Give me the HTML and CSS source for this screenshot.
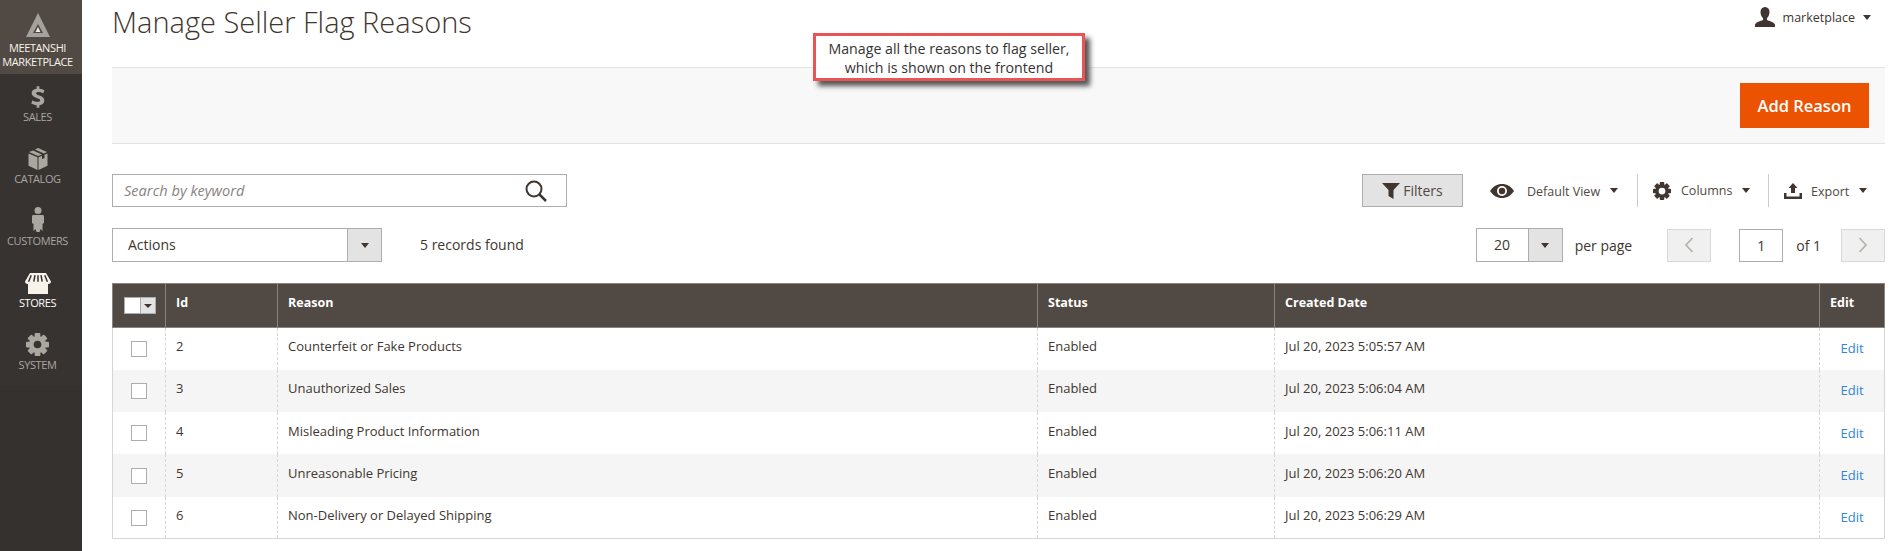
FILE: index.html
```html
<!doctype html>
<html>
  <head>
    <meta charset="utf8">
    <title>Manage Seller Flag Reasons</title>
    <link rel="stylesheet" href="styles.css">
  </head>
  <body>
    <nav class="sidebar">
      <div class="logo">
        <svg class="logo-mark" width="24" height="25" viewBox="0 0 24 25"><path d="M12 0L24 24H0z" fill="#a5a19c"/><path d="M12 11l5 9H7z" fill="#514943"/><path d="M12 14l2.400 5H9.600z" fill="#f0eeea"/></svg>
        <div class="logo-text">MEETANSHI<br>MARKETPLACE</div>
      </div>
      <div class="nav-list">
        <a class="nav-item">
          <svg width="18" height="22" viewBox="0 0 20 24"><path d="M8.500 0h3v2.800c2.400.2 4.300.9 5.600 1.700l-1.300 3.500c-1.600-.9-3.400-1.500-5.200-1.500-1.700 0-2.600.6-2.600 1.500 0 1 1 1.500 3.500 2.300 3.600 1.100 5.500 2.700 5.500 5.500 0 2.700-1.900 4.800-5.500 5.300V24h-3v-2.900c-2.500-.2-4.700-1-6-1.900l1.300-3.600c1.600 1 3.700 1.800 5.700 1.800 1.800 0 2.900-.7 2.900-1.800 0-1-.9-1.600-3.200-2.300C5.100 12 2.900 10.500 2.900 7.600c0-2.500 1.800-4.400 5.600-4.800z" fill="#aaa6a0"/></svg>
          <span>SALES</span>
        </a>
        <a class="nav-item">
          <svg width="20" height="22" viewBox="0 0 20 22"><path d="M10 0l9 4-3 1.500-9-4zM5 2.400l9 4L10 8 1 4z" fill="#aaa6a0"/><path d="M.500 5.500l9 3.700V22l-9-4.200zM19.500 5.500v12.300l-9 4.200V9.200l3.500-1.400V11l2.500-1V6.800z" fill="#aaa6a0"/></svg>
          <span>CATALOG</span>
        </a>
        <a class="nav-item">
          <svg width="14" height="25" viewBox="0 0 14 25"><circle cx="7" cy="3.500" r="3.500" fill="#aaa6a0"/><path d="M2.500 8h9c1 0 1.500.6 1.500 1.500V16l-1.500 1v7L9.500 22 8.500 25h-3l-1-3-2 2v-7L1 16V9.500C1 8.600 1.500 8 2.500 8z" fill="#aaa6a0"/></svg>
          <span>CUSTOMERS</span>
        </a>
        <a class="nav-item active">
          <svg width="26" height="21" viewBox="0 0 26 21"><path d="M5 0h16l5 8.500c0 1.500-1.100 2.500-2.500 2.500H23v10H3V11h-.500C1.100 11 0 10 0 8.500z" fill="#f7f3eb"/><path d="M6.200 2.200L3.600 8.700M10 2.200L8.800 8.700M13 2.200v6.500M16 2.200l1.200 6.500M19.800 2.200l2.600 6.500" stroke="#373330" stroke-width="1.500" fill="none"/></svg>
          <span>STORES</span>
        </a>
        <a class="nav-item">
          <svg width="23" height="23" viewBox="0 0 24 24"><g fill="#aaa6a0"><rect x="9" width="6" height="24" rx="1"/><rect x="9" width="6" height="24" rx="1" transform="rotate(45 12 12)"/><rect x="9" width="6" height="24" rx="1" transform="rotate(90 12 12)"/><rect x="9" width="6" height="24" rx="1" transform="rotate(135 12 12)"/><circle cx="12" cy="12" r="9"/></g><circle cx="12" cy="12" r="4" fill="#373330"/></svg>
          <span>SYSTEM</span>
        </a>
      </div>
    </nav>

    <div class="page">
      <div class="title-row">
        <h1>Manage Seller Flag Reasons</h1>
        <div class="user">
          <svg width="20" height="20" viewBox="0 0 20 20"><path d="M10 0c3 0 4.500 2.200 4.500 5 0 2.500-1 5-2.500 6v2c2.500 1 7 2 8 4.500V20H0v-2.500C1 15 5.500 14 8 13v-2C6.500 10 5.500 7.500 5.500 5 5.500 2.200 7 0 10 0z" fill="#41362f"/></svg>
          <span>marketplace</span>
          <i class="caret"></i>
        </div>
      </div>

      <div class="callout">Manage all the reasons to flag seller,<br>which is shown on the frontend</div>

      <div class="actions-bar">
        <button class="btn-primary">Add Reason</button>
      </div>

      <div class="toolbar">
        <div class="search">
          <span>Search by keyword</span>
          <svg width="24" height="24" viewBox="0 0 24 24"><circle cx="10" cy="10" r="7.500" fill="none" stroke="#41362f" stroke-width="2"/><path d="M15.500 15.500L22 22" stroke="#41362f" stroke-width="2.500"/></svg>
        </div>
        <div class="tools">
          <button class="btn-filters">
            <svg width="18" height="16" viewBox="0 0 18 16"><path d="M0 0h18l-6.500 7v9l-5-3V7z" fill="#41362f"/></svg>
            Filters
          </button>
          <div class="tool tool-view">
            <svg width="24" height="14" viewBox="0 0 24 14"><path d="M0 7C3 2.500 7 0 12 0s9 2.500 12 7c-3 4.500-7 7-12 7S3 11.500 0 7z" fill="#41362f"/><circle cx="12" cy="7" r="5" fill="#fff"/><circle cx="12" cy="7" r="3.200" fill="#41362f"/></svg>
            <span>Default View</span>
            <i class="caret"></i>
          </div>
          <div class="tool tool-columns">
            <svg width="18" height="18" viewBox="0 0 24 24"><g fill="#41362f"><rect x="9" width="6" height="24" rx="1"/><rect x="9" width="6" height="24" rx="1" transform="rotate(45 12 12)"/><rect x="9" width="6" height="24" rx="1" transform="rotate(90 12 12)"/><rect x="9" width="6" height="24" rx="1" transform="rotate(135 12 12)"/><circle cx="12" cy="12" r="9"/></g><circle cx="12" cy="12" r="4.500" fill="#fff"/></svg>
            <span>Columns</span>
            <i class="caret"></i>
          </div>
          <div class="tool tool-export">
            <svg width="18" height="16" viewBox="0 0 18 16"><path d="M9 0l4.500 5H11v5H7V5H4.500z" fill="#41362f"/><path d="M0 10h2.500v3.500h13V10H18v6H0z" fill="#41362f"/></svg>
            <span>Export</span>
            <i class="caret"></i>
          </div>
        </div>
      </div>

      <div class="toolbar toolbar-second">
        <div class="mass">
          <div class="select select-actions"><span>Actions</span><b><i class="caret"></i></b></div>
          <span class="found">5 records found</span>
        </div>
        <div class="pager">
          <div class="select select-size"><span>20</span><b><i class="caret"></i></b></div>
          <span class="per-page">per page</span>
          <button class="page-arrow prev"><svg width="10" height="16" viewBox="0 0 10 16"><path d="M8.500 1L2 8l6.500 7" fill="none" stroke="#b7b3ae" stroke-width="1.800"/></svg></button>
          <div class="page-input">1</div>
          <span class="page-of">of 1</span>
          <button class="page-arrow next"><svg width="10" height="16" viewBox="0 0 10 16"><path d="M1.500 1L8 8l-6.500 7" fill="none" stroke="#b7b3ae" stroke-width="1.800"/></svg></button>
        </div>
      </div>

      <table class="grid">
        <thead>
          <tr>
            <th class="col-check"><div class="head-check"><i></i><b><i class="caret"></i></b></div></th>
            <th class="col-id">Id</th>
            <th class="col-reason">Reason</th>
            <th class="col-status">Status</th>
            <th class="col-date">Created Date</th>
            <th class="col-edit">Edit</th>
          </tr>
        </thead>
        <tbody>
          <tr>
            <td class="cell-check"><i class="check"></i></td>
            <td>2</td>
            <td>Counterfeit or Fake Products</td>
            <td>Enabled</td>
            <td>Jul 20, 2023 5:05:57 AM</td>
            <td class="cell-edit"><a>Edit</a></td>
          </tr>
          <tr>
            <td class="cell-check"><i class="check"></i></td>
            <td>3</td>
            <td>Unauthorized Sales</td>
            <td>Enabled</td>
            <td>Jul 20, 2023 5:06:04 AM</td>
            <td class="cell-edit"><a>Edit</a></td>
          </tr>
          <tr>
            <td class="cell-check"><i class="check"></i></td>
            <td>4</td>
            <td>Misleading Product Information</td>
            <td>Enabled</td>
            <td>Jul 20, 2023 5:06:11 AM</td>
            <td class="cell-edit"><a>Edit</a></td>
          </tr>
          <tr>
            <td class="cell-check"><i class="check"></i></td>
            <td>5</td>
            <td>Unreasonable Pricing</td>
            <td>Enabled</td>
            <td>Jul 20, 2023 5:06:20 AM</td>
            <td class="cell-edit"><a>Edit</a></td>
          </tr>
          <tr>
            <td class="cell-check"><i class="check"></i></td>
            <td>6</td>
            <td>Non-Delivery or Delayed Shipping</td>
            <td>Enabled</td>
            <td>Jul 20, 2023 5:06:29 AM</td>
            <td class="cell-edit"><a>Edit</a></td>
          </tr>
        </tbody>
      </table>
    </div>
  </body>
</html>
```

FILE: styles.css
```css
html, body { margin: 0; padding: 0; height: 100%; overflow: hidden; background: #fff; }
body { display: flex; font-family: "Open Sans", sans-serif; font-size: 14px; color: #41362f; }
button { font-family: inherit; cursor: pointer; }

.sidebar { width: 82px; height: 551px; flex: none; background: #35312e; }
.logo { height: 74px; background: #514943; display: flex; flex-direction: column; align-items: center; padding: 13px 7px 0 0; box-sizing: border-box; color: #f7f3eb; font-size: 11px; line-height: 14px; text-align: center; }
.logo-text { margin-top: 3px; white-space: nowrap; letter-spacing: -.4px; }
.nav-list { background: #373330; padding-right: 7px; height: 311px; }
.nav-item { height: 62px; display: flex; flex-direction: column; align-items: center; justify-content: flex-end; padding-bottom: 12px; box-sizing: border-box; gap: 1px; color: #aaa6a0; font-size: 11px; line-height: 15px; letter-spacing: -.4px; }
.nav-item.active { color: #fff; }

.page { flex: 1; min-width: 0; padding-left: 30px; padding-right: 13px; position: relative; }

.title-row { height: 67px; display: flex; justify-content: space-between; }
h1 { margin: 2px 0 0; font-size: 29px; line-height: 40px; font-weight: 300; color: #41362f; }
.user { display: flex; align-items: center; height: 20px; margin-top: 7px; gap: 8px; font-size: 12.500px; color: #41362f; padding-right: 14px; }
.caret { display: inline-block; width: 0; height: 0; border-style: solid; border-width: 5px 4.500px 0; border-color: #41362f transparent transparent; }

.callout { position: absolute; left: 731px; top: 33px; width: 272px; height: 48px; box-sizing: border-box; border: 3px solid #ea5455; background: #fff; box-shadow: 5px 5px 5px #555; padding-top: 3px; font-size: 14.200px; line-height: 19px; text-align: center; color: #333; white-space: nowrap; }

.actions-bar { height: 77px; box-sizing: border-box; background: #f8f8f8; border-top: 1px solid #e3e3e3; border-bottom: 1px solid #e3e3e3; display: flex; justify-content: flex-end; align-items: center; padding-right: 16px; }
.btn-primary { width: 129px; height: 45px; border: 0; background: #eb5202; color: #fff; font-size: 16.500px; font-weight: 600; padding: 0; }

.toolbar { display: flex; justify-content: space-between; align-items: center; margin-top: 30px; height: 33px; }
.toolbar-second { margin-top: 21px; height: 34px; }
.search { width: 455px; height: 33px; box-sizing: border-box; border: 1px solid #adadad; display: flex; justify-content: space-between; align-items: center; padding: 0 18px 0 11px; font-size: 14.600px; font-style: italic; color: #8a837f; }
.search span { margin-bottom: 2px; }
.search svg { width: 24px; height: 24px; }
.tools { display: flex; align-items: center; height: 33px; margin-right: 16px; }
.btn-filters { width: 101px; height: 33px; border: 1px solid #adadad; background: #e3e3e3; color: #514943; font-size: 14px; display: flex; align-items: center; justify-content: center; gap: 3px; margin-right: 27px; padding: 0; }
.tool { display: flex; align-items: center; height: 33px; font-size: 12.500px; color: #514943; }
.tool .caret { margin-left: 10px; }
.tool-view { width: 147px; border-right: 1px solid #ccc; }
.tool-view span { margin: 2px 0 0 13px; }
.tool-columns { width: 131px; padding-left: 15px; box-sizing: border-box; border-right: 1px solid #ccc; }
.tool-columns span { margin-left: 10px; }
.tool-export { width: 100px; padding-left: 15px; box-sizing: border-box; }
.tool-export span { margin: 2px 0 0 9px; }

.mass { display: flex; align-items: center; }
.select { height: 34px; box-sizing: border-box; border: 1px solid #adadad; display: flex; align-items: stretch; }
.select span { flex: 1; line-height: 32px; }
.select b { width: 33px; background: #e3e3e3; border-left: 1px solid #adadad; display: flex; align-items: center; justify-content: center; }
.select-actions { width: 270px; }
.select-actions span { padding-left: 15px; }
.found { margin: 0 0 2px 38px; }
.pager { display: flex; align-items: center; }
.select-size { width: 87px; }
.select-size span { text-align: center; }
.per-page { margin-left: 12px; margin-right: 35px; }
.page-arrow { width: 44px; height: 33px; background: #f0f0f0; border: 1px solid #d8d8d8; padding: 0; display: flex; align-items: center; justify-content: center; }
.page-input { width: 44px; height: 33px; box-sizing: border-box; border: 1px solid #adadad; margin-left: 28px; text-align: center; line-height: 31px; }
.page-of { margin-left: 13px; margin-right: 20px; }

.grid { width: 100%; margin-top: 21px; border-collapse: collapse; table-layout: fixed; }
.grid th { height: 44px; box-sizing: border-box; background: #514943; color: #fff; text-align: left; font-size: 12.500px; font-weight: 700; border: 1px solid #8a837f; padding: 0 10px 6px; }
.grid td { height: 42.300px; box-sizing: border-box; padding: 0 10px 5px; border-left: 1px dashed #d6d6d6; border-right: 1px dashed #d6d6d6; font-size: 13px; color: #41362f; }
.grid tbody tr:nth-child(even) td { background: #f5f5f5; }
.grid tbody tr:last-child td { border-bottom: 1px solid #d6d6d6; }
.grid td:first-child { border-left: 1px solid #d6d6d6; }
.grid td:last-child { border-right: 1px solid #d6d6d6; }
.col-check { width: 53px; }
.col-id { width: 112px; }
.col-reason { width: 760px; }
.col-status { width: 237px; }
.col-date { width: 545px; }
.grid th.col-check { padding: 0 0 0 11px; }
.head-check { width: 30px; height: 15px; display: flex; background: #fff; border: 1px solid #adadad; }
.head-check > i { flex: 1; }
.head-check b { width: 14px; background: #e3e3e3; display: flex; align-items: center; justify-content: center; border-left: 1px solid #adadad; }
.head-check .caret { border-width: 4px 4px 0; }
.grid td.cell-check { padding: 0 0 0 18px; }
.check { display: block; width: 16px; height: 16px; box-sizing: border-box; border: 1px solid #adadad; background: #fff; }
.grid td.cell-edit { text-align: center; padding: 0 0 1px; }
.cell-edit a { color: #2f86d8; font-size: 13px; }
```
